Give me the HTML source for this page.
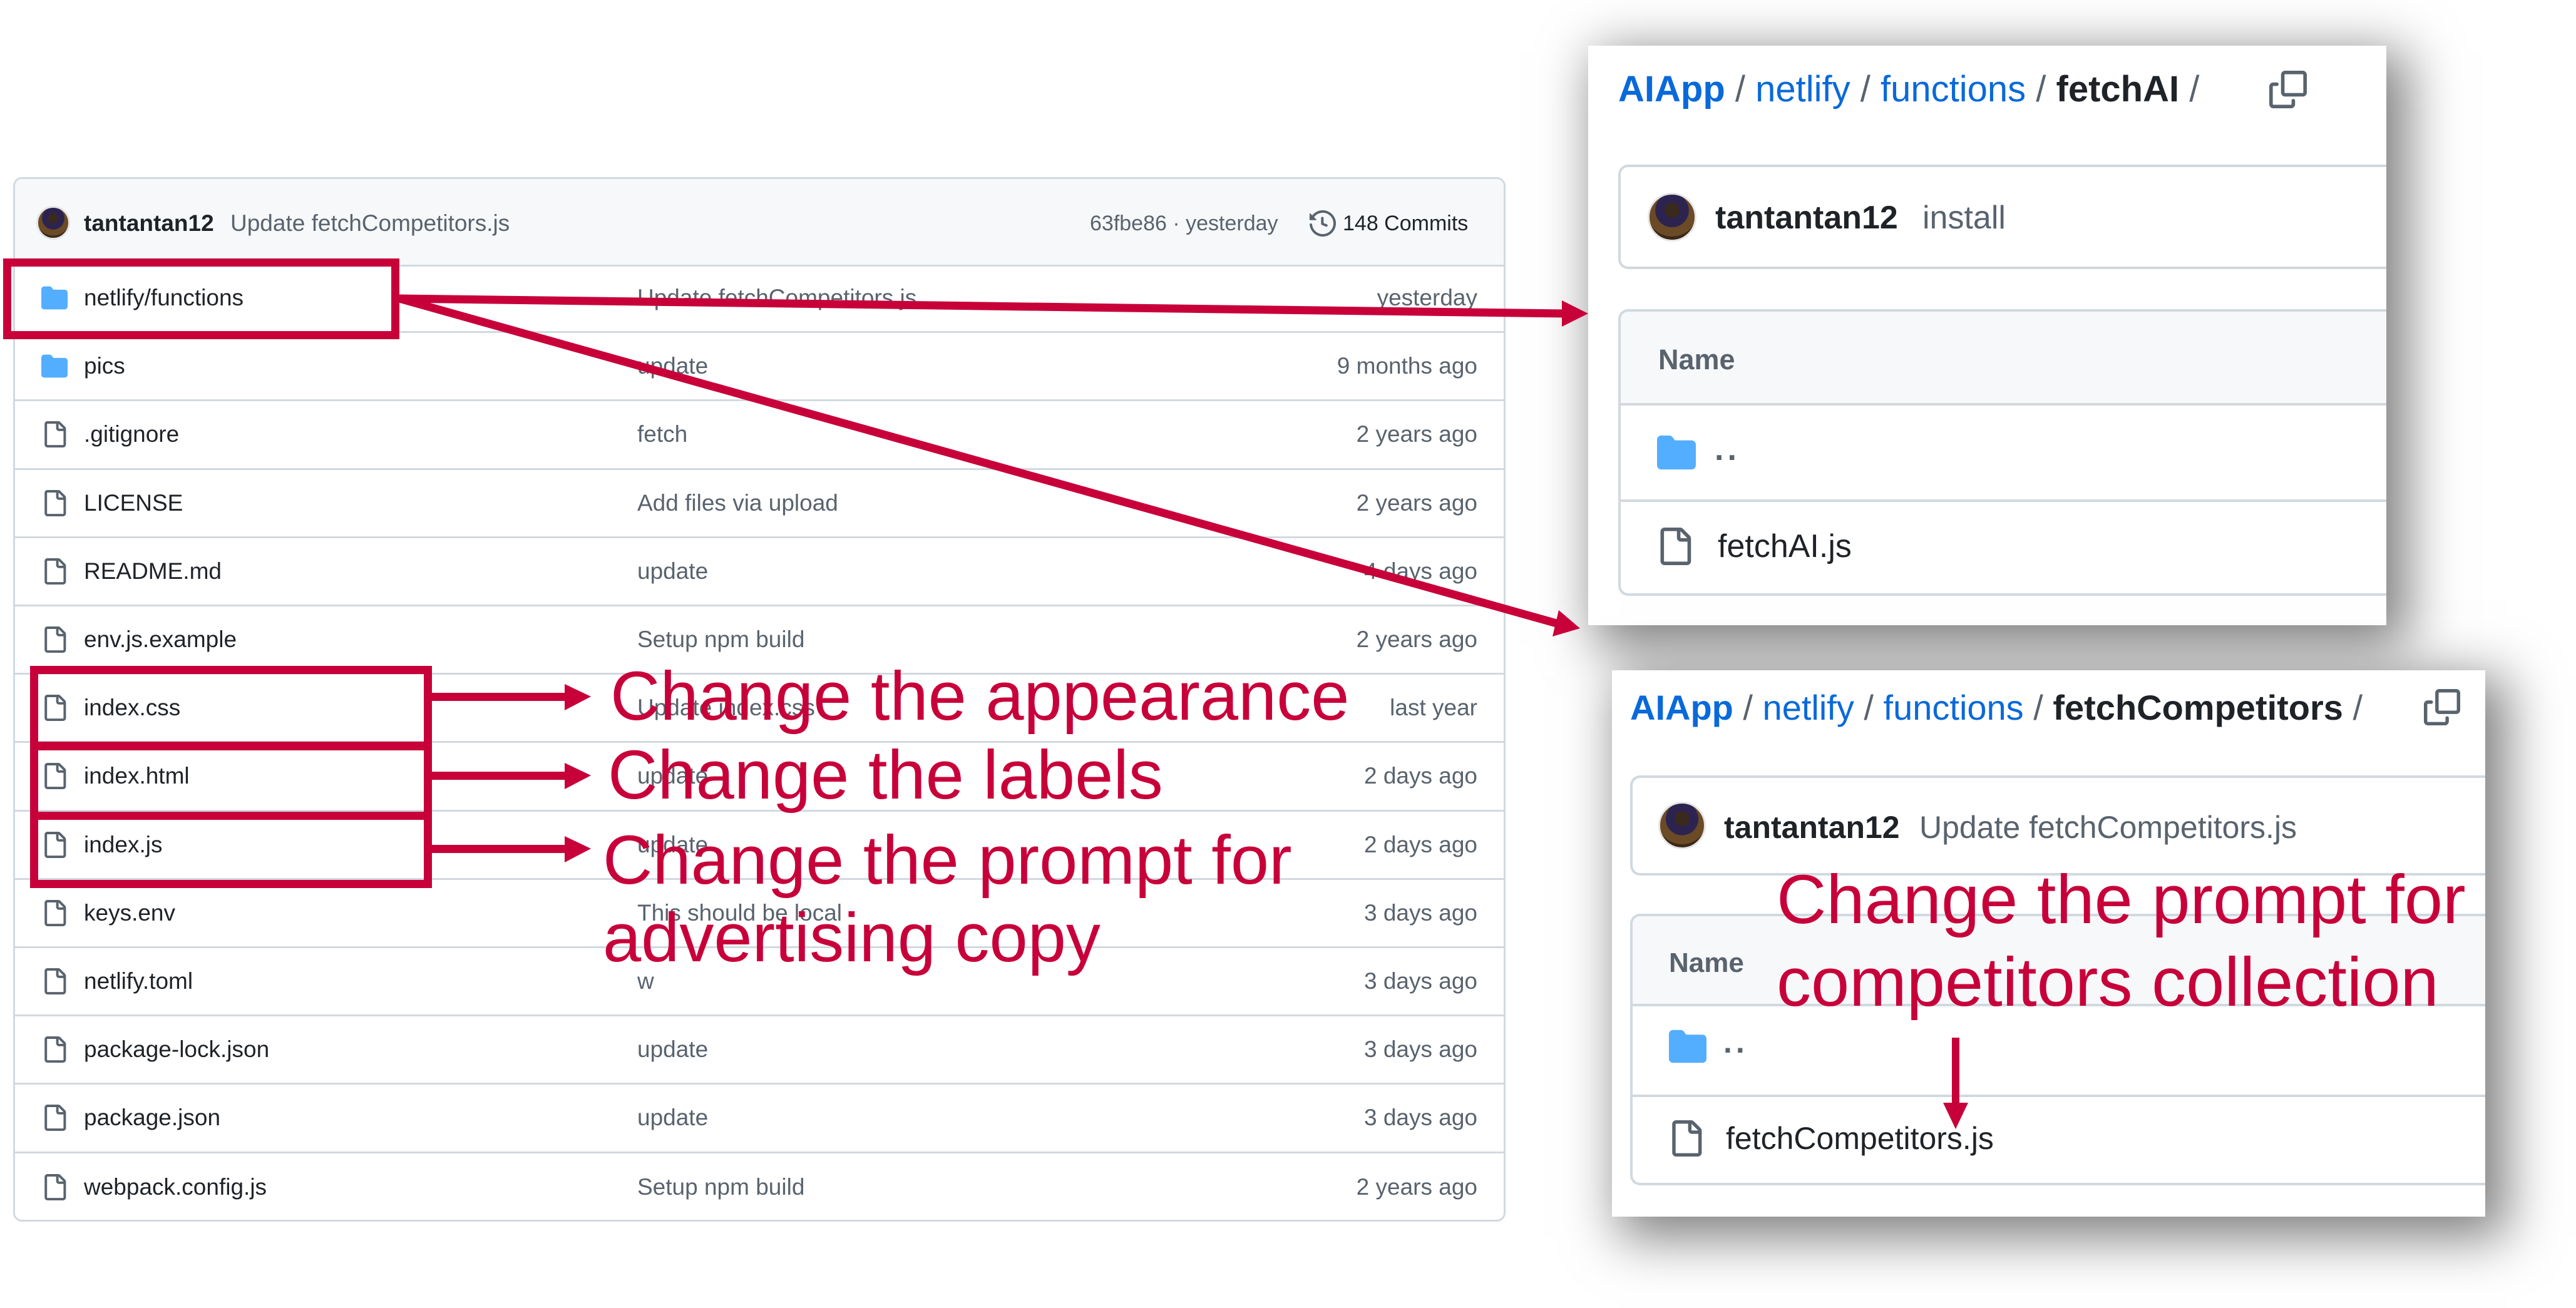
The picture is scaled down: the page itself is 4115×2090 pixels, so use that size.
<!DOCTYPE html>
<html><head><meta charset="utf-8"><style>
*{margin:0;padding:0;box-sizing:border-box}
body{width:4115px;height:2090px;background:#fff;position:relative;overflow:hidden;font-family:"Liberation Sans",Arial,sans-serif;color:#1f2328}
.abs{position:absolute}
.tbl{left:21px;top:283px;width:2384px;height:1669px;border:3px solid #d1d9e0;border-radius:14px;overflow:hidden}
.hdr{position:absolute;left:0;top:0;right:0;height:140px;background:#f6f8fa;border-bottom:3px solid #d1d9e0}
.row{position:absolute;left:0;right:0;height:109.2px;border-bottom:3px solid #d1d9e0;font-size:37px}
.row .nm{position:absolute;left:113px;top:50%;transform:translateY(-50%);color:#1f2328}
.row .ms{position:absolute;left:997px;top:50%;transform:translateY(-50%);color:#59636e}
.row .dt{position:absolute;right:45px;top:50%;transform:translateY(-50%);color:#59636e}
.row svg{position:absolute;left:45px;top:50%;transform:translateY(-50%)}
.ann{position:absolute;color:#c8003a;font-size:110px;line-height:1;white-space:nowrap;font-family:"Liberation Sans",Arial,sans-serif}
.panel{position:absolute;background:#fff;box-shadow:22px 22px 80px 12px rgba(0,0,0,.5);overflow:hidden}
.bc{position:absolute;white-space:nowrap;color:#1f2328}
.bc .l{color:#0969da}
.bc .s{color:#59636e;font-weight:normal}
.box{position:absolute;border:4px solid #d1d9e0;border-radius:16px;border-right:none;border-top-right-radius:0;border-bottom-right-radius:0}
.av{position:absolute;border-radius:50%;background:radial-gradient(circle at 50% 35%,#3a2a1e 0 20%,#2c2350 21% 45%,#6b4a26 46% 70%,#3b2816 71%);border:3px solid #e5e5e5}
</style></head><body>

<div class="abs tbl">
  <div class="hdr">
    <div class="av" style="left:34px;top:43px;width:54px;height:54px"></div>
    <div class="abs" style="left:110px;top:50px;font-size:37px;font-weight:bold">tantantan12</div>
    <div class="abs" style="left:344px;top:50px;font-size:37px;color:#59636e">Update fetchCompetitors.js</div>
    <div class="abs" style="left:1717px;top:52px;font-size:34px;color:#59636e">63fbe86 · yesterday</div>
    <svg class="abs" style="left:2068px;top:50px" width="42" height="42" viewBox="0 0 16 16"><path fill="#59636e" d="m.427 1.927 1.215 1.215a8.002 8.002 0 1 1-1.6 5.685.75.75 0 1 1 1.493-.154 6.5 6.5 0 1 0 1.18-4.458l1.358 1.358A.25.25 0 0 1 3.896 6H.25A.25.25 0 0 1 0 5.750V2.104a.25.25 0 0 1 .427-.177ZM7.75 4a.75.75 0 0 1 .75.75v2.992l2.028.812a.75.75 0 0 1-.557 1.392l-2.5-1A.751.751 0 0 1 7 8.25v-3.5A.75.75 0 0 1 7.75 4Z"/></svg>
    <div class="abs" style="left:2121px;top:52px;font-size:34px;color:#1f2328">148 Commits</div>
  </div>
</div>

<svg width="0" height="0" style="position:absolute"><defs>
<symbol id="fi" viewBox="0 0 16 16"><path fill="#59636e" d="M2 1.75C2 .784 2.784 0 3.75 0h6.586c.464 0 .909.184 1.237.513l2.914 2.914c.329.328.513.773.513 1.237v9.586A1.75 1.75 0 0 1 13.25 16h-9.5A1.75 1.75 0 0 1 2 14.25Zm1.75-.25a.25.25 0 0 0-.25.25v12.5c0 .138.112.25.25.25h9.5a.25.25 0 0 0 .25-.25V6h-2.750A1.75 1.75 0 0 1 9 4.25V1.5Zm6.75.062V4.25c0 .138.112.25.25.25h2.688l-.011-.013-2.914-2.914-.013-.011Z"/></symbol>
<symbol id="fo" viewBox="0 0 16 16"><path fill="#54aeff" d="M1.75 1A1.75 1.75 0 0 0 0 2.75v10.5C0 14.216.784 15 1.75 15h12.5A1.75 1.75 0 0 0 16 13.25v-8.5A1.75 1.75 0 0 0 14.25 3H7.5a.25.25 0 0 1-.2-.1l-.9-1.2C6.07 1.26 5.55 1 5 1H1.75Z"/></symbol>
<symbol id="cp" viewBox="0 0 16 16"><path fill="#59636e" d="M0 6.75C0 5.784.784 5 1.75 5h1.5a.75.75 0 0 1 0 1.5h-1.5a.25.25 0 0 0-.25.25v7.5c0 .138.112.25.25.25h7.5a.25.25 0 0 0 .25-.25v-1.5a.75.75 0 0 1 1.5 0v1.5A1.75 1.75 0 0 1 9.25 16h-7.5A1.75 1.75 0 0 1 0 14.25Z M5 1.75C5 .784 5.784 0 6.75 0h7.5C15.216 0 16 .784 16 1.75v7.5A1.75 1.75 0 0 1 14.25 11h-7.5A1.75 1.75 0 0 1 5 9.25Zm1.75-.25a.25.25 0 0 0-.25.25v7.5c0 .138.112.25.25.25h7.5a.25.25 0 0 0 .25-.25v-7.5a.25.25 0 0 0-.25-.25Z"/></symbol>
</defs></svg>

<div class="abs" style="left:21px;top:283px;width:2384px;height:1669px;pointer-events:none">
<div class="row" style="top:140px"><svg width="42" height="42"><use href="#fo"/></svg><span class="nm">netlify/functions</span><span class="ms">Update fetchCompetitors.js</span><span class="dt">yesterday</span></div>
<div class="row" style="top:249.2px"><svg width="42" height="42"><use href="#fo"/></svg><span class="nm">pics</span><span class="ms">update</span><span class="dt">9 months ago</span></div>
<div class="row" style="top:358.4px"><svg width="42" height="42"><use href="#fi"/></svg><span class="nm">.gitignore</span><span class="ms">fetch</span><span class="dt">2 years ago</span></div>
<div class="row" style="top:467.6px"><svg width="42" height="42"><use href="#fi"/></svg><span class="nm">LICENSE</span><span class="ms">Add files via upload</span><span class="dt">2 years ago</span></div>
<div class="row" style="top:576.8px"><svg width="42" height="42"><use href="#fi"/></svg><span class="nm">README.md</span><span class="ms">update</span><span class="dt">4 days ago</span></div>
<div class="row" style="top:686px"><svg width="42" height="42"><use href="#fi"/></svg><span class="nm">env.js.example</span><span class="ms">Setup npm build</span><span class="dt">2 years ago</span></div>
<div class="row" style="top:795.2px"><svg width="42" height="42"><use href="#fi"/></svg><span class="nm">index.css</span><span class="ms">Update index.css</span><span class="dt">last year</span></div>
<div class="row" style="top:904.4px"><svg width="42" height="42"><use href="#fi"/></svg><span class="nm">index.html</span><span class="ms">update</span><span class="dt">2 days ago</span></div>
<div class="row" style="top:1013.6px"><svg width="42" height="42"><use href="#fi"/></svg><span class="nm">index.js</span><span class="ms">update</span><span class="dt">2 days ago</span></div>
<div class="row" style="top:1122.8px"><svg width="42" height="42"><use href="#fi"/></svg><span class="nm">keys.env</span><span class="ms">This should be local</span><span class="dt">3 days ago</span></div>
<div class="row" style="top:1232px"><svg width="42" height="42"><use href="#fi"/></svg><span class="nm">netlify.toml</span><span class="ms">w</span><span class="dt">3 days ago</span></div>
<div class="row" style="top:1341.2px"><svg width="42" height="42"><use href="#fi"/></svg><span class="nm">package-lock.json</span><span class="ms">update</span><span class="dt">3 days ago</span></div>
<div class="row" style="top:1450.4px"><svg width="42" height="42"><use href="#fi"/></svg><span class="nm">package.json</span><span class="ms">update</span><span class="dt">3 days ago</span></div>
<div class="row" style="top:1559.6px;border-bottom:none"><svg width="42" height="42"><use href="#fi"/></svg><span class="nm">webpack.config.js</span><span class="ms">Setup npm build</span><span class="dt">2 years ago</span></div>
</div>

<div class="panel" style="left:2537px;top:73px;width:1275px;height:926px">
  <div class="bc" style="left:48px;top:36px;font-size:58px;font-weight:bold"><span class="l">AIApp</span> <span class="s">/</span> <span class="l" style="font-weight:normal">netlify</span> <span class="s">/</span> <span class="l" style="font-weight:normal">functions</span> <span class="s">/</span> fetchAI <span class="s">/</span></div>
  <svg class="abs" style="left:1088px;top:40px" width="60" height="60"><use href="#cp"/></svg>
  <div class="box" style="left:48px;top:190px;width:1240px;height:167px"></div>
  <div class="av" style="left:95px;top:235px;width:78px;height:78px"></div>
  <div class="abs" style="left:203px;top:245px;font-size:52px;font-weight:bold">tantantan12</div>
  <div class="abs" style="left:534px;top:245px;font-size:52px;color:#59636e">install</div>
  <div class="box" style="left:48px;top:421px;width:1240px;height:458px;overflow:hidden">
    <div class="abs" style="left:0;top:0;right:0;height:150px;background:#f6f8fa;border-bottom:4px solid #d1d9e0"></div>
    <div class="abs" style="left:60px;top:51px;font-size:45px;color:#59636e;font-weight:bold">Name</div>
    <svg class="abs" style="left:58px;top:194px" width="62" height="62"><use href="#fo"/></svg>
    <div class="abs" style="left:150px;top:190px;font-size:52px;color:#59636e;font-weight:bold;letter-spacing:6px">..</div>
    <div class="abs" style="left:0;right:0;top:300px;border-top:4px solid #d1d9e0"></div>
    <svg class="abs" style="left:56px;top:345px" width="60" height="60"><use href="#fi"/></svg>
    <div class="abs" style="left:155px;top:345px;font-size:52px">fetchAI.js</div>
  </div>
</div>

<div class="panel" style="left:2575px;top:1071px;width:1395px;height:873px">
  <div class="bc" style="left:29px;top:27px;font-size:56px;font-weight:bold"><span class="l">AIApp</span> <span class="s">/</span> <span class="l" style="font-weight:normal">netlify</span> <span class="s">/</span> <span class="l" style="font-weight:normal">functions</span> <span class="s">/</span> fetchCompetitors <span class="s">/</span></div>
  <svg class="abs" style="left:1297px;top:30px" width="58" height="58"><use href="#cp"/></svg>
  <div class="box" style="left:29px;top:168px;width:1380px;height:160px"></div>
  <div class="av" style="left:74px;top:210px;width:76px;height:76px"></div>
  <div class="abs" style="left:179px;top:222px;font-size:50px;font-weight:bold">tantantan12</div>
  <div class="abs" style="left:491px;top:222px;font-size:50px;color:#59636e">Update fetchCompetitors.js</div>
  <div class="box" style="left:29px;top:389px;width:1380px;height:434px;overflow:hidden">
    <div class="abs" style="left:0;top:0;right:0;height:144px;background:#f6f8fa;border-bottom:4px solid #d1d9e0"></div>
    <div class="abs" style="left:58px;top:50px;font-size:44px;color:#59636e;font-weight:bold">Name</div>
    <svg class="abs" style="left:58px;top:178px" width="60" height="60"><use href="#fo"/></svg>
    <div class="abs" style="left:145px;top:172px;font-size:50px;color:#59636e;font-weight:bold;letter-spacing:6px">..</div>
    <div class="abs" style="left:0;right:0;top:285px;border-top:4px solid #d1d9e0"></div>
    <svg class="abs" style="left:56px;top:326px" width="58" height="58"><use href="#fi"/></svg>
    <div class="abs" style="left:149px;top:326px;font-size:50px">fetchCompetitors.js</div>
  </div>
</div>

<div class="abs" style="left:5px;top:413px;width:633px;height:129px;border:13px solid #c8003a"></div>
<div class="abs" style="left:48px;top:1064px;width:642px;height:135px;border:13px solid #c8003a"></div>
<div class="abs" style="left:48px;top:1185px;width:642px;height:125px;border:13px solid #c8003a"></div>
<div class="abs" style="left:48px;top:1297px;width:642px;height:122px;border:13px solid #c8003a"></div>

<svg class="abs" style="left:0;top:0" width="4115" height="2090">
  <g fill="#c8003a" stroke="none">
    <rect x="690" y="1107" width="215" height="13"/><polygon points="902,1093 944,1113 902,1135"/>
    <rect x="690" y="1233" width="215" height="13"/><polygon points="902,1219 944,1239 902,1261"/>
    <rect x="690" y="1350" width="215" height="13"/><polygon points="902,1336 944,1356 902,1378"/>
    <polygon points="2537,501 2495,480 2495,522"/>
    <polygon points="2524,1004 2490,975 2480,1017"/>
    <rect x="3118" y="1658" width="12" height="110"/><polygon points="3104,1762 3144,1762 3124,1804"/>
  </g>
  <g stroke="#c8003a" stroke-width="13" fill="none">
    <line x1="638" y1="477" x2="2500" y2="501"/>
    <line x1="638" y1="477" x2="2490" y2="997"/>
  </g>
</svg>

<div class="ann" style="left:975px;top:1058px">Change the appearance</div>
<div class="ann" style="left:971px;top:1184px">Change the labels</div>
<div class="ann" style="left:963px;top:1320px">Change the prompt for</div>
<div class="ann" style="left:963px;top:1444px">advertising copy</div>
<div class="ann" style="left:2838px;top:1383px">Change the prompt for</div>
<div class="ann" style="left:2838px;top:1515px">competitors collection</div>

</body></html>
